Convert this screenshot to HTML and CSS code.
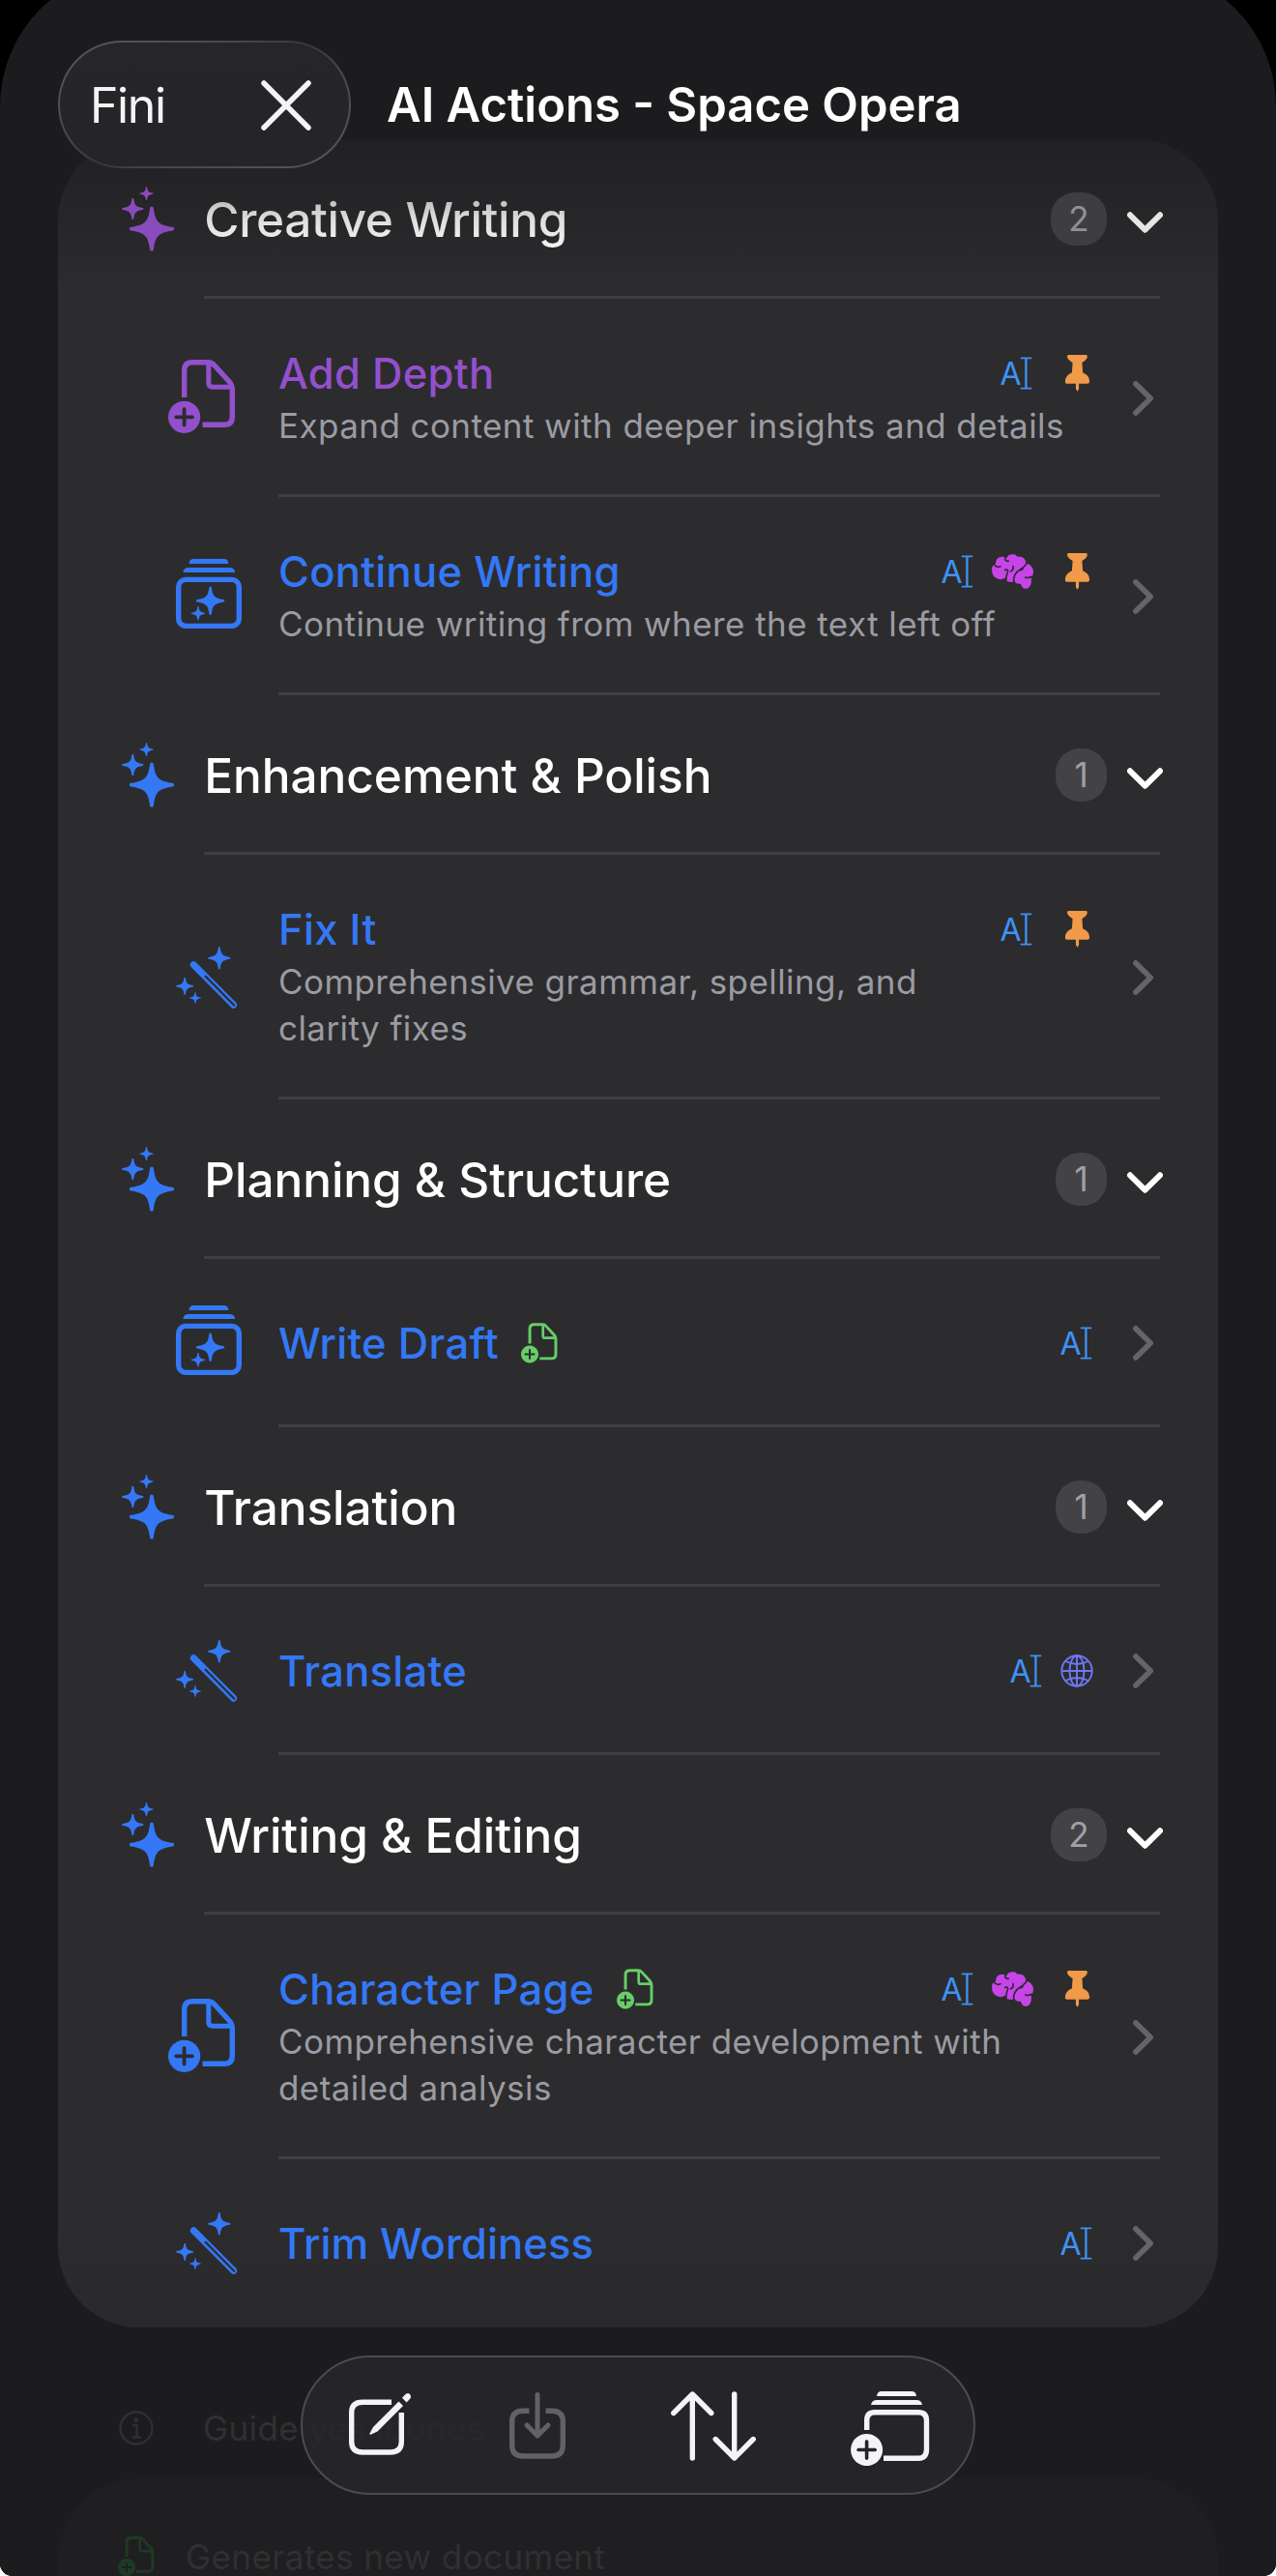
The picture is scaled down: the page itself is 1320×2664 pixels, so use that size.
FILE: index.html
```
<!DOCTYPE html>
<html lang="en">
<head>
    <meta charset="UTF-8">
    <meta name="viewport" content="width=device-width, initial-scale=1.0">
    <title>AI Actions - Space Opera</title>
    <link rel="stylesheet" href="styles.css">
</head>
<body>
    <!-- icon sprite -->
    <svg class="sprite" width="0" height="0">
        <symbol id="star" viewBox="-100 -100 200 200">
            <path d="M0-100C5-100 7-97 8-93C17-32 27-20 91-8C97-7 100-5 100 0C100 5 97 7 91 8C27 20 17 32 8 93C7 97 5 100 0 100C-5 100-7 97-8 93C-17 32-27 20-91 8C-97 7-100 5-100 0C-100-5-97-7-91-8C-27-20-17-32-8-93C-7-97-5-100 0-100Z"/>
        </symbol>
        <symbol id="sparkles" viewBox="0 0 163 201">
            <use href="#star" x="23.5" y="61.5" width="139" height="139"/>
            <use href="#star" x="0" y="35" width="68" height="68"/>
            <use href="#star" x="55" y="0" width="43" height="43"/>
        </symbol>
        <symbol id="doc-plus" viewBox="0 0 70 76">
            <path fill="none" stroke="currentColor" stroke-width="5.4" d="M16.7 39V11Q16.7 2.7 25 2.7H41Q45 2.7 48 6L63 22.500Q66.300 26 66.300 31V59Q66.300 67.300 58 67.300H35.500"/>
            <path fill="none" stroke="currentColor" stroke-width="5" d="M41.800 3V24Q41.800 28.200 46 28.200H65"/>
            <path fill-rule="evenodd" d="M16.600 42.700a16.600 16.600 0 1 0 .01 0ZM14.700 50.500q1.900-3 3.800 0v6.900h6.900q3 1.900 0 3.800h-6.900v6.900q-1.900 3-3.800 0v-6.900h-6.900q-3-1.900 0-3.800h6.900Z"/>
        </symbol>
        <symbol id="stack-star" viewBox="0 0 68 72">
            <path d="M13.500 5Q13.800 0 18.500 0H49.500Q54 0 54.300 5ZM7.300 14Q8 9 13 9H55Q60.500 9 61.300 14Z"/>
            <rect x="2.700" y="21.400" width="62.600" height="48" rx="7.500" fill="none" stroke="currentColor" stroke-width="5.400"/>
            <use href="#star" x="20.800" y="28.500" width="29.600" height="29.600"/>
            <use href="#star" x="15.600" y="48.900" width="14.800" height="14.800"/>
        </symbol>
        <symbol id="wand" viewBox="0 0 190 192">
            <use href="#star" x="99" y="0" width="71" height="71"/>
            <use href="#star" x="0" y="95" width="55" height="55"/>
            <use href="#star" x="42" y="141" width="36" height="36"/>
            <path fill="none" stroke="currentColor" stroke-width="21" stroke-linecap="round" d="M55 56L179 181"/>
            <path class="slot" stroke-width="6.500" stroke-linecap="round" d="M92 92L181 182"/>
        </symbol>
        <symbol id="cursor" viewBox="0 0 34 34">
            <text x="-.5" y="28.600" font-size="32" textLength="21">A</text>
            <path fill="none" stroke="currentColor" stroke-width="2.300" d="M26.400 2V32"/>
            <path fill="none" stroke="currentColor" stroke-width="1.800" stroke-linecap="round" d="M21.500 1.300H31.500M21.500 32.700H31.500"/>
        </symbol>
        <symbol id="pin" viewBox="0 0 33 38">
            <path d="M8.300 0H25Q27.300 0 27 2.500Q26.700 5 21.600 8.300L22.300 18.500Q29.500 21.500 29.300 28Q29.200 30 27 30H18.300V35.500L16.700 38L15.100 35.500V30H6.300Q4 30 4.100 28Q4 21.500 11.100 18.500L11.800 8.300Q6.600 5 6.200 2.500Q6 0 8.300 0Z" transform="translate(-.2 -.2)"/>
        </symbol>
        <symbol id="brain" viewBox="0 0 129 108">
            <path d="M12 30Q12 8 33 8Q40 8 47 12Q50 0 66 1Q74 1 80 8Q104 6 106 30Q115 30 118 34Q129 42 129 56Q129 66 122 72Q125 92 117 102Q108 112 96 104Q92 100 90 92Q72 94 70 82Q66 90 58 86Q48 88 43 80V72Q36 80 24 78Q0 74 0 48Q0 34 12 30Z"/>
            <path class="fold" d="M7 32Q14 44 27 38M42 8Q38 22 52 22M41 49Q54 46 48 60Q45 66 44 86M66 38Q68 50 58 54M110 22Q108 36 88 48Q64 62 68 90M88 50Q92 50 96 46M124 70Q112 76 104 72"/>
        </symbol>
        <symbol id="globe" viewBox="0 0 34 34">
            <g fill="none" stroke="currentColor" stroke-width="1.900">
                <circle cx="17" cy="17" r="15.700"/>
                <ellipse cx="17" cy="17" rx="7.500" ry="15.700"/>
                <path d="M17 1V33M1 17H33M5.500 7Q17 13 28.500 7M5.500 27Q17 21 28.500 27"/>
            </g>
        </symbol>
        <symbol id="down" viewBox="0 0 37 29">
            <path fill="none" stroke="currentColor" stroke-width="6" stroke-linecap="round" stroke-linejoin="round" d="M3 10.300L18.500 25.700L34 10.300"/>
        </symbol>
        <symbol id="right" viewBox="0 0 21 36">
            <path fill="none" stroke="currentColor" stroke-width="5.600" stroke-linecap="round" stroke-linejoin="round" d="M2.900 2.900L18.200 18L2.900 33.100"/>
        </symbol>
    </svg>

    <div class="screen">
        <main class="sheet">
            <section class="card">
                <div class="row group first">
                    <svg class="sparkles purple"><use href="#sparkles"/></svg>
                    <h2>Creative Writing</h2>
                    <span class="count">2</span>
                    <svg class="down"><use href="#down"/></svg>
                </div>
                <div class="row item">
                    <svg class="icon doc purple"><use href="#doc-plus"/></svg>
                    <div class="body">
                        <div class="line">
                            <h3 class="purple">Add Depth</h3>
                            <div class="tags">
                                <svg class="cursor"><use href="#cursor"/></svg>
                                <svg class="pin"><use href="#pin"/></svg>
                            </div>
                        </div>
                        <p>Expand content with deeper insights and details</p>
                    </div>
                    <svg class="right"><use href="#right"/></svg>
                </div>
                <div class="row item">
                    <svg class="icon stack"><use href="#stack-star"/></svg>
                    <div class="body">
                        <div class="line">
                            <h3>Continue Writing</h3>
                            <div class="tags">
                                <svg class="cursor"><use href="#cursor"/></svg>
                                <svg class="brain"><use href="#brain"/></svg>
                                <svg class="pin"><use href="#pin"/></svg>
                            </div>
                        </div>
                        <p>Continue writing from where the text left off</p>
                    </div>
                    <svg class="right"><use href="#right"/></svg>
                </div>

                <div class="row group">
                    <svg class="sparkles"><use href="#sparkles"/></svg>
                    <h2>Enhancement &amp; Polish</h2>
                    <span class="count one">1</span>
                    <svg class="down"><use href="#down"/></svg>
                </div>
                <div class="row item tall">
                    <svg class="icon wand"><use href="#wand"/></svg>
                    <div class="body">
                        <div class="line">
                            <h3>Fix It</h3>
                            <div class="tags">
                                <svg class="cursor"><use href="#cursor"/></svg>
                                <svg class="pin"><use href="#pin"/></svg>
                            </div>
                        </div>
                        <p>Comprehensive grammar, spelling, and<br>clarity fixes</p>
                    </div>
                    <svg class="right"><use href="#right"/></svg>
                </div>

                <div class="row group">
                    <svg class="sparkles"><use href="#sparkles"/></svg>
                    <h2>Planning &amp; Structure</h2>
                    <span class="count one">1</span>
                    <svg class="down"><use href="#down"/></svg>
                </div>
                <div class="row item short">
                    <svg class="icon stack"><use href="#stack-star"/></svg>
                    <div class="body">
                        <div class="line">
                            <h3>Write Draft</h3>
                            <svg class="new-doc"><use href="#doc-plus"/></svg>
                            <div class="tags">
                                <svg class="cursor"><use href="#cursor"/></svg>
                            </div>
                        </div>
                    </div>
                    <svg class="right"><use href="#right"/></svg>
                </div>

                <div class="row group">
                    <svg class="sparkles"><use href="#sparkles"/></svg>
                    <h2>Translation</h2>
                    <span class="count one">1</span>
                    <svg class="down"><use href="#down"/></svg>
                </div>
                <div class="row item short">
                    <svg class="icon wand"><use href="#wand"/></svg>
                    <div class="body">
                        <div class="line">
                            <h3>Translate</h3>
                            <div class="tags">
                                <svg class="cursor"><use href="#cursor"/></svg>
                                <svg class="globe"><use href="#globe"/></svg>
                            </div>
                        </div>
                    </div>
                    <svg class="right"><use href="#right"/></svg>
                </div>

                <div class="row group">
                    <svg class="sparkles"><use href="#sparkles"/></svg>
                    <h2>Writing &amp; Editing</h2>
                    <span class="count">2</span>
                    <svg class="down"><use href="#down"/></svg>
                </div>
                <div class="row item tall">
                    <svg class="icon doc"><use href="#doc-plus"/></svg>
                    <div class="body">
                        <div class="line">
                            <h3>Character Page</h3>
                            <svg class="new-doc"><use href="#doc-plus"/></svg>
                            <div class="tags">
                                <svg class="cursor"><use href="#cursor"/></svg>
                                <svg class="brain"><use href="#brain"/></svg>
                                <svg class="pin"><use href="#pin"/></svg>
                            </div>
                        </div>
                        <p>Comprehensive character development with<br>detailed analysis</p>
                    </div>
                    <svg class="right"><use href="#right"/></svg>
                </div>
                <div class="row item short last">
                    <svg class="icon wand"><use href="#wand"/></svg>
                    <div class="body">
                        <div class="line">
                            <h3>Trim Wordiness</h3>
                            <div class="tags">
                                <svg class="cursor"><use href="#cursor"/></svg>
                            </div>
                        </div>
                    </div>
                    <svg class="right"><use href="#right"/></svg>
                </div>
            </section>

            <div class="guide">
                <svg viewBox="0 0 36 36">
                    <g fill="none" stroke="currentColor" stroke-width="2.400">
                        <circle cx="18" cy="18" r="16.500"/>
                        <path d="M14 15H18.500V27M13.500 27.500H23"/>
                    </g>
                    <circle cx="17.800" cy="9.800" r="2.300"/>
                </svg>
                <span>Guide yes idones</span>
            </div>

            <section class="legend">
                <svg><use href="#doc-plus"/></svg>
                <span>Generates new document</span>
            </section>
        </main>

        <header class="topbar">
            <div class="fini">
                <span>Fini</span>
                <svg viewBox="0 0 52 52"><path fill="none" stroke="currentColor" stroke-width="5.500" stroke-linecap="round" d="M3 3L49 49M49 3L3 49"/></svg>
            </div>
            <h1>AI Actions - Space Opera</h1>
        </header>

        <nav class="toolbar">
            <svg class="compose" viewBox="0 0 64 64">
                <path fill="none" stroke="currentColor" stroke-width="5.400" d="M44 9.200H14Q2.700 9.200 2.700 20V50Q2.700 61 14 61H43Q54.300 61 54.300 50V20"/>
                <path d="M51.500 8.500L56 13L29.500 39.500L22.500 42.800Q21 43 21.500 41.500L25 35Z"/>
                <path d="M57.500 2Q60.500-1.500 63 1Q65.500 4 62 7L59.500 9.500L55 4.700Z"/>
            </svg>
            <svg class="download" viewBox="0 0 58 69">
                <path fill="none" stroke="currentColor" stroke-width="5.400" d="M20.500 19.200H14Q2.700 19.200 2.700 30V55Q2.700 66 14 66H44Q55.300 66 55.300 55V30Q55.300 19.200 44 19.200H37.500"/>
                <path fill="none" stroke="currentColor" stroke-width="5" stroke-linecap="round" stroke-linejoin="round" d="M29 2.500V44M18 34L29 45L40 34"/>
            </svg>
            <svg class="sort" viewBox="0 0 88 72">
                <path fill="none" stroke="currentColor" stroke-width="5.400" stroke-linecap="round" stroke-linejoin="round" d="M22.300 69V3M2.800 22.500L22.300 3L41.800 22.500M65.700 3V69M46.200 49.500L65.700 69L85.200 49.500"/>
            </svg>
            <svg class="add" viewBox="0 0 82 77">
                <path d="M27 5Q27.500 0 32 0H63Q67.500 0 68 5ZM21 14Q22 9 27 9H68Q73 9 74 14Z"/>
                <path fill="none" stroke="currentColor" stroke-width="5.400" d="M16.700 40V30Q16.700 21.700 25 21.700H70Q78.500 21.700 78.500 30V60Q78.500 69.300 70 69.300H34"/>
                <path fill-rule="evenodd" d="M16.600 44a16.500 16.500 0 1 0 .01 0ZM14.800 51.500q1.800-3 3.600 0v7.200h7.200q3 1.800 0 3.600h-7.200v7.200q-1.800 3-3.600 0v-7.200h-7.200q-3-1.800 0-3.600h7.200Z"/>
            </svg>
        </nav>
    </div>
</body>
</html>
```
FILE: styles.css
```
* {
    box-sizing: border-box;
    margin: 0;
    padding: 0;
}

html {
    background: #fff;
}

body {
    font-family: Inter, 'Liberation Sans', sans-serif;
    color: #fff;
}

svg {
    display: block;
    fill: currentColor;
    overflow: visible;
    flex-shrink: 0;
}

.sprite {
    position: absolute;
}

.screen {
    position: relative;
    width: 1320px;
    height: 2664px;
    background: #000;
    border-radius: 0 0 13px 13px;
    overflow: hidden;
}

.sheet {
    height: 2696px;
    margin-top: -32px;
    padding: 176px 60px 0;
    background: #1c1c1e;
    border-radius: 142px 142px 0 0;
}

/* list card */
.card {
    background: linear-gradient(#212123, #2c2c2e 160px, #2c2c2e 2150px, #29292b);
    border-radius: 84px;
}

.row {
    display: flex;
    align-items: center;
    padding-right: 57px;
    background: linear-gradient(#3f3f41, #3f3f41) no-repeat;
}

.group {
    height: 165px;
    padding-left: 66px;
    background-size: 989px 3px;
    background-position: 151px 100%;
}

.item {
    height: 205px;
    padding: 0 67px 0 114px;
    color: #3478f6;
    background-size: 912px 3px;
    background-position: 228px 100%;
}

.item.tall {
    height: 253px;
}

.item.short {
    height: 174px;
}

.item.last {
    background: none;
}

.sparkles {
    width: 54.3px;
    height: 67px;
    color: #3478f6;
}

h2 {
    flex: 1;
    margin-left: 31px;
    font-size: 49.5px;
    line-height: 60px;
    font-weight: 500;
    letter-spacing: -0.05px;
}

.first h2 {
    letter-spacing: -0.35px;
    color: transparent;
    background: linear-gradient(#b8b8b8 10%, #dedede 50%, #f4f4f4);
    background-clip: text;
}

.first .sparkles {
    opacity: 0.9;
}

.first .down {
    color: #e6e6e6;
}

.first .count {
    background: #3e3e40;
    color: #909095;
}

.purple,
.first .purple {
    color: #9350cc;
}

.count {
    width: 58px;
    height: 55px;
    border-radius: 25px;
    background: #434345;
    color: #a0a0a7;
    font-size: 35px;
    line-height: 55px;
    text-align: center;
}

.count.one {
    width: 53px;
}

.down {
    width: 37px;
    height: 29px;
    margin-left: 21px;
}

.icon {
    margin-right: 34px;
}

.icon.doc {
    width: 70px;
    height: 76px;
    margin: -3px 44px 0 0;
}

.icon.stack {
    width: 68px;
    height: 72px;
    margin: -5px 38px 0 8px;
}

.item.short .icon.stack {
    margin-top: -7px;
}

.icon.wand {
    width: 63.3px;
    height: 64px;
    margin: 0 42.7px 0 8px;
}

.slot {
    fill: none;
    stroke: #2c2c2e;
}

.fold {
    fill: none;
    stroke: #2c2c2e;
    stroke-width: 5;
    stroke-linecap: round;
}

.body {
    flex: 1;
    margin-top: -3px;
}

.short .body {
    margin-top: 0;
}

.line {
    display: flex;
    align-items: center;
    height: 60px;
    padding-right: 41px;
}

h3 {
    font-size: 43.5px;
    line-height: 60px;
    font-weight: 500;
    letter-spacing: 0.3px;
}

.last h3 {
    letter-spacing: 0.1px;
}

p {
    font-size: 35px;
    line-height: 48px;
    letter-spacing: 0.43px;
    color: #9b9ba2;
    white-space: nowrap;
}

.new-doc {
    width: 38px;
    height: 42px;
    margin-left: 23px;
    color: #67ce67;
}

.tags {
    display: flex;
    align-items: center;
    margin-left: auto;
}

.cursor {
    width: 34px;
    height: 34px;
    color: #3e92f8;
}

.pin {
    width: 33px;
    height: 38px;
    margin-left: 29px;
    color: #f09a4a;
}

.brain {
    width: 43px;
    height: 36px;
    margin-left: 18px;
    color: #c744e8;
}

.globe {
    width: 34px;
    height: 34px;
    margin-left: 18px;
    color: #6f78f5;
}

.right {
    width: 21px;
    height: 36px;
    color: #656569;
}

/* dimmed content under the toolbar */
.guide {
    display: flex;
    align-items: center;
    height: 156px;
    padding: 52px 63px 0;
    gap: 51px;
    font-size: 35px;
    color: #303032;
    letter-spacing: 0.4px;
}

.guide svg {
    width: 36px;
    height: 36px;
}

.legend {
    display: flex;
    height: 101px;
    padding: 60px 62px 0;
    gap: 32px;
    border-radius: 84px 84px 0 0;
    background: #1f1f21;
    font-size: 35px;
    line-height: 42px;
    letter-spacing: 0.4px;
    color: #303032;
}

.legend svg {
    width: 38px;
    height: 41px;
    color: #1f3a23;
}

/* floating bars */
.topbar {
    position: absolute;
    top: 42px;
    left: 60px;
    display: flex;
    align-items: center;
    gap: 37px;
    height: 132px;
}

.fini,
.toolbar {
    display: flex;
    align-items: center;
    border: 2px solid transparent;
}

.fini {
    justify-content: space-between;
    width: 303px;
    height: 132px;
    padding: 1px 39px 0 31px;
    border-radius: 66px;
    background: linear-gradient(#262628, #252527) padding-box, linear-gradient(150deg, #59595d, #48484b 35%, #38383b 50%, #48484b 65%, #59595d) border-box;
    font-size: 50px;
    letter-spacing: -1.4px;
    color: #f4f4f6;
}

.fini svg {
    width: 52px;
    height: 52px;
}

h1 {
    font-size: 49px;
    font-weight: 600;
    white-space: nowrap;
}

.toolbar {
    position: absolute;
    top: 2436px;
    left: 311px;
    width: 698px;
    height: 144px;
    padding: 0 46px 0 48px;
    border-radius: 72px;
    background: rgba(39, 39, 41, 0.85);
    border-color: #4c4c50;
    color: #f4f4f6;
}

.compose {
    width: 64px;
    height: 64px;
    margin-top: -2px;
}

.download {
    width: 58px;
    height: 69px;
    margin: 1px 0 0 102px;
    color: #626264;
}

.sort {
    width: 88px;
    height: 72px;
    margin: 2px 0 0 109px;
}

.add {
    width: 82px;
    height: 77px;
    margin: 7px 0 0 98px;
}
```
